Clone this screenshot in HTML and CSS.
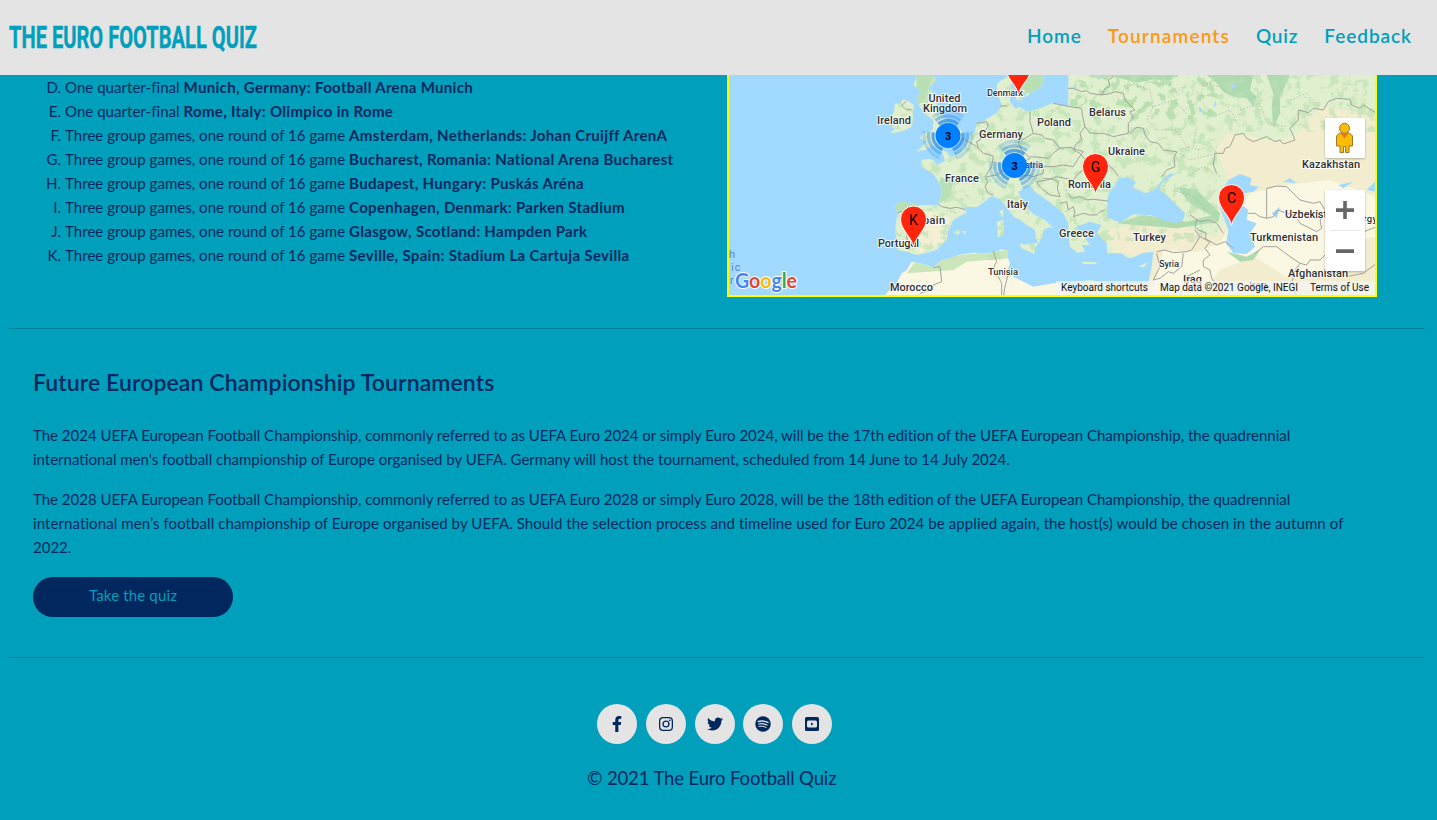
FILE: index.html
```
<!DOCTYPE html>
<html lang="en">
<head>
<meta charset="utf-8">
<title>The Euro Football Quiz</title>
<link rel="stylesheet" href="styles.css">
</head>
<body>
<header class="header">
  <a class="brand"><svg width="260" height="40"><text x="9" y="30" textLength="248" lengthAdjust="spacingAndGlyphs">THE EURO FOOTBALL QUIZ</text></svg></a>
  <nav class="nav">
    <a>Home</a><a class="active">Tournaments</a><a class="quiz">Quiz</a><a>Feedback</a>
  </nav>
</header>
<main>
  <section class="venues">
    <ol class="list" start="4">
      <li>One quarter-final <b>Munich, Germany: Football Arena Munich</b></li>
      <li>One quarter-final <b>Rome, Italy: Olimpico in Rome</b></li>
      <li>Three group games, one round of 16 game <b>Amsterdam, Netherlands: Johan Cruijff ArenA</b></li>
      <li>Three group games, one round of 16 game <b>Bucharest, Romania: National Arena Bucharest</b></li>
      <li>Three group games, one round of 16 game <b>Budapest, Hungary: Puskás Aréna</b></li>
      <li>Three group games, one round of 16 game <b>Copenhagen, Denmark: Parken Stadium</b></li>
      <li>Three group games, one round of 16 game <b>Glasgow, Scotland: Hampden Park</b></li>
      <li>Three group games, one round of 16 game <b>Seville, Spain: Stadium La Cartuja Sevilla</b></li>
    </ol>
    <div class="map">
      <svg width="646" height="220" viewBox="729 75 646 220">
        <defs>
          <filter id="woods" x="0" y="0" width="100%" height="100%" color-interpolation-filters="sRGB">
            <feTurbulence type="fractalNoise" baseFrequency=".035" numOctaves="4" seed="8"/>
            <feColorMatrix values="0 0 0 0 .73  0 0 0 0 .88  0 0 0 0 .70  9 0 0 0 -4.7"/>
          </filter>
          <path id="west" d="M605 270L625 266L640 270L650 285L664 278L675 273L665 240L680 245L690 262L705 255L720 240L745 210L755 190L765 185L770 160L785 155L805 145L830 128L845 105L830 60L832 40L868 15L885 15L872 50L884 60L870 78L870 95L885 115L900 112L920 125L960 115L1000 98L1035 108L1070 110L1070 470L1045 460L1030 430L1005 410L980 390L945 365L930 345L912 350L902 362L895 365L910 400L940 432L975 450L1000 475L985 472L970 480L966 505L955 520L948 505L945 480L920 465L900 450L882 440L870 425L840 388L815 378L790 398L770 412L735 410L740 428L720 438L700 450L685 480L680 510L650 540L620 548L590 555L570 548L535 540L525 480L532 430L525 405L545 395L600 405L655 405L665 370L660 340L640 312L605 290Z"/>
          <path id="isles" d="M592 15L638 15L650 30L625 55L650 75L650 120L682 155L700 170L720 175L732 200L700 218L690 230L655 230L635 226L618 240L600 242L590 245L620 215L600 205L610 190L638 180L640 150L612 130L600 110L590 90L602 60L580 45ZM525 100L540 102L545 90L560 90L582 105L578 130L580 150L575 170L545 185L512 190L525 175L515 172L530 155L515 140L522 125ZM890 15L972 15L965 50L930 70L920 80L906 55ZM898 520L915 524L955 518L945 535L943 552L905 535ZM830 455L850 450L852 492L834 502ZM838 422L850 418L848 446ZM885 70L908 72L906 92L890 90ZM700 487L715 480L720 490L710 494ZM725 484L738 483L736 494ZM662 498L672 493L668 503Z"/>
          <path id="africa" d="M575 575L600 580L640 592L665 570L690 565L715 555L760 548L800 550L830 545L845 538L865 542L862 560L870 580L860 610L900 630L940 650L1000 640L1040 640L1060 690L480 690L530 640L545 610L560 600Z"/>
          <clipPath id="land"><use href="#west"/><use href="#isles"/><use href="#africa"/></clipPath>
          <path id="pin" d="M0 0C-1.500-10-13-17-13-28A13 13 0 0 1 13-28C13-17 1.500-10 0 0Z" fill="#ff260d" stroke="#fff" stroke-width="1"/>
          <g id="cluster">
            <g fill="none" stroke="#1680ea" stroke-width="3.3">
              <circle r="15" stroke-opacity=".65" stroke-dasharray="21 10.4" transform="rotate(230)"/>
              <circle r="19.5" stroke-opacity=".4" stroke-dasharray="27 13.8" transform="rotate(230)"/>
              <circle r="24" stroke-opacity=".2" stroke-dasharray="33 17.2" transform="rotate(230)"/>
            </g>
            <circle r="12.5" fill="#0080ff"/>
            <text y="4" text-anchor="middle" class="count">3</text>
          </g>
        </defs>
        <rect x="727" y="75" width="650" height="222" fill="#a2d9ff"/>
        <g transform="translate(720 70) scale(.33333)">
          <path d="M1045 15H1970V680H1045Z" fill="#e0efcd"/>
          <path d="M1490 240L1520 190L1600 200L1680 215L1740 185L1800 110L1970 130V680H1240L1300 570L1180 545L1160 480L1240 465L1400 470L1490 500L1550 400Z" fill="#f2edcf"/>
          <path d="M1590 370L1700 345L1830 330L1970 380V500L1840 520L1820 600L1700 620L1600 560L1500 600L1440 680H1290L1330 540L1430 545L1500 520Z" fill="#faf7e3"/>
          <path d="M1150 15H1370L1350 32L1300 28L1250 38L1200 25ZM1460 15H1600L1590 60L1610 80L1600 110L1580 85L1540 80L1510 65L1490 40ZM1640 15H1710L1690 60L1680 80L1680 130L1660 175L1655 110L1660 70ZM1370 350L1430 360L1500 430L1480 440L1410 400ZM1190 460L1270 435L1400 455L1500 430L1495 455L1370 475L1250 465ZM1520 545L1580 560L1620 540L1600 570L1560 575Z" fill="#afdab0"/>
          <rect x="1045" y="15" width="445" height="130" filter="url(#woods)"/>
          <rect x="1045" y="145" width="445" height="370" filter="url(#woods)" opacity=".6"/>
          <rect x="1490" y="15" width="480" height="170" filter="url(#woods)" opacity=".6"/>
          <g fill="#a2d9ff">
            <path d="M960 15L1045 15L1035 60L1040 90L1025 108L960 110Z"/>
            <path d="M1160 440L1164 375L1200 325L1225 322L1245 335L1240 355L1275 370L1305 360L1320 338L1348 312L1368 310L1325 340L1318 360L1345 380L1360 395L1395 430L1390 450L1370 458L1340 455L1315 442L1290 435L1240 433L1200 458Z"/>
            <path d="M940 450L1020 455L1045 495L1050 530L1072 548L1096 545L1085 525L1110 525L1085 490L1070 470L1110 455L1145 465L1130 490L1160 520L1162 550L1180 550L1205 550L1220 562L1235 565L1265 550L1300 545L1295 590L1285 640L1160 642L1110 630L1070 635L1050 670L990 650L940 640Z"/>
            <path d="M1500 370L1525 330L1560 312L1595 325L1590 345L1617 350L1600 365L1570 370L1560 400L1585 420L1580 450L1610 460L1590 490L1605 530L1580 552L1540 550L1518 520L1525 480L1510 440L1500 410ZM1940 360L1970 330V365ZM1655 430L1680 410L1670 445ZM1690 335L1710 325L1730 340ZM1855 345L1900 335L1870 355ZM1540 35L1550 50L1535 60ZM1435 110L1448 118L1440 130ZM1485 90L1490 105L1482 112ZM1130 22L1145 18L1140 28ZM1060 45L1070 50L1064 62Z"/>
          </g>
          <g fill="#e0efcd"><use href="#west"/><use href="#isles"/></g>
          <use href="#africa" fill="#faf7e3"/>
          <g clip-path="url(#land)">
            <path d="M570 450L620 420L690 440L680 510L600 550L570 520Z" fill="#f5f0d5"/>
            <path d="M920 15H975V70H900ZM515 390L600 400L590 418L525 430ZM590 15H640L620 80L590 110ZM660 320L700 335L690 380L660 400Z" fill="#b8dfb5"/>
            <path d="M700 600L560 610L590 570L860 540L870 565L740 575Z" fill="#cce6bc"/>
            <rect x="480" y="15" width="590" height="555" filter="url(#woods)" opacity=".65"/>
          </g>
          <path d="M1255 590L1285 575L1272 592ZM1085 575L1130 577L1128 583L1090 582ZM1240 350L1260 325L1300 345L1275 368Z" fill="#e0efcd"/>
          <g fill="none" stroke="#a0a39c" stroke-width="3" stroke-linejoin="round">
            <path d="M560 92L545 107L560 120L575 118M532 430L542 425L570 432L565 470L560 500L568 540M655 402L665 410L690 415L710 412L735 418M728 205L745 215L770 230L790 250L820 258L815 290L795 320L803 335L795 350L805 370L820 375M770 160L800 155L805 170L785 190L780 210L770 215L775 235M840 108L860 108M930 125L930 155L940 190L915 205L895 215L905 240L930 265L912 275L905 295L880 310L850 300L830 315L800 320M940 190L965 195L975 205L1000 210L1020 235L1005 245L985 265L960 262L930 260M1020 235L1050 232L1090 245L1075 265L1060 290L1030 285L1000 290L970 290L970 310L940 320L920 315L900 320L880 310M970 325L1000 328L1015 335L1012 355L1020 380L990 375L970 360L955 345L950 335L980 330L1010 320L1060 330L1075 310L1090 300M1045 370L1055 385L1080 380L1100 390L1120 388L1165 393M1020 400L1040 395L1045 420L1060 410L1065 430L1060 440L1090 430L1110 435L1130 435L1140 425L1155 420M1000 100L1050 110L1085 115L1088 140L1095 170L1080 190L1085 210L1070 220L1060 240L1080 250L1095 268L1135 275L1150 265L1170 290L1182 300L1195 320M1045 55L1060 55L1085 65L1100 62L1110 70L1145 75L1155 55L1170 50L1165 30L1180 20M1145 75L1165 72L1185 65L1210 70L1215 90L1245 120L1230 125L1240 145L1225 160L1225 190L1180 200L1150 190L1110 190L1095 170M1230 190L1250 172L1270 175L1275 195L1290 215L1315 220L1330 240L1370 245L1362 265L1365 290L1340 300L1325 320M1410 435L1440 455L1465 450L1490 460L1510 490M1430 450L1425 470L1435 480L1460 490L1455 505L1490 525L1515 515L1540 535M1310 545L1335 540L1360 548L1400 545L1415 540L1440 500L1425 480M1310 550L1320 590L1300 630L1320 625L1345 605L1360 610L1385 590L1390 550M1440 500L1470 515L1455 535L1470 555L1450 570L1450 590L1470 600L1475 625L1485 640L1500 680M1605 550L1630 530L1670 530L1690 545L1710 560L1740 580L1725 600L1715 640L1730 680M1585 430L1605 430L1620 440L1640 445V355L1670 348L1700 350L1740 390L1780 400L1800 395L1820 430L1800 450L1805 475L1790 485L1740 460L1725 435L1700 430L1675 420L1660 440L1640 445M1490 310L1480 285L1485 250L1510 250L1515 235L1530 230L1545 195L1570 190L1580 205L1600 215L1640 200L1665 215L1680 210L1690 222L1725 210L1710 175L1735 150L1735 120L1765 128L1780 115L1810 120L1825 95L1850 85L1890 88L1895 105L1920 115L1930 105L1970 130M1740 580L1760 585L1770 570L1800 570L1820 550M640 592L660 590L665 635L640 645L630 660L600 670M820 545L830 575L822 590L830 610L845 640L845 680M865 610L855 650L850 680M1440 600L1400 620L1380 680M1870 480L1890 475L1920 490L1970 470M1880 620L1930 610L1970 580"/>
            <path d="M1200 70L1240 40L1290 60L1300 110L1360 90L1390 120L1440 90L1480 140L1530 120L1560 170M1300 110L1280 150L1310 180L1370 180L1400 230L1440 240L1470 220L1490 250M1390 120L1430 170L1420 230M1440 90L1450 40L1500 50L1530 80M1540 60L1560 20M1560 120L1620 100L1640 160L1700 170M1260 25L1300 40L1350 45L1380 80M1710 90L1760 70L1800 110M1370 245L1410 270L1490 250M1400 320L1450 290L1500 320M1360 360L1420 380L1460 420" stroke-dasharray="5 5" stroke="#a9b5a3" stroke-width="2"/>
          </g>
        </g>
        <g class="labels">
          <text x="928.500" y="102" textLength="32">United</text><text x="923" y="112" textLength="44">Kingdom</text><text x="877" y="124" textLength="34">Ireland</text>
          <text x="987" y="95.500" textLength="36" class="sm">Denmark</text><text x="979" y="138" textLength="44">Germany</text><text x="1037" y="126" textLength="34">Poland</text><text x="1089" y="116" textLength="37">Belarus</text>
          <text x="945" y="182" textLength="34">France</text><text x="1014" y="167.500" textLength="29" class="sm">Austria</text><text x="1007" y="208" textLength="21">Italy</text><text x="916" y="224" textLength="29">Spain</text><text x="878" y="247" textLength="41">Portugal</text>
          <text x="1068" y="188" textLength="43">Romania</text><text x="1108" y="155" textLength="37">Ukraine</text><text x="1059" y="237" textLength="35">Greece</text><text x="1133" y="241" textLength="33">Turkey</text><text x="1159" y="266.500" textLength="20" class="sm">Syria</text><text x="1183" y="283" textLength="19">Iraq</text><text x="1249" y="289" textLength="18">Iran</text>
          <text x="1302" y="168" textLength="58">Kazakhstan</text><text x="1285" y="218" textLength="54">Uzbekistan</text><text x="1250" y="241" textLength="68">Turkmenistan</text><text x="1288" y="277" textLength="60">Afghanistan</text><text x="1352" y="222" textLength="50" class="sm">Kyrgyzstan</text>
          <text x="890" y="291" textLength="43">Morocco</text><text x="988" y="274.500" textLength="30" class="sm">Tunisia</text>
        </g>
        <g class="ocean"><text x="729" y="258">h</text><text x="731" y="271">ic</text><text x="730" y="284">r</text></g>
        <use href="#cluster" x="948" y="135.500"/><use href="#cluster" x="1014.500" y="165.500"/>
        <use href="#pin" x="1018.500" y="95"/><use href="#pin" x="913.500" y="247"/><use href="#pin" x="1095.500" y="194.500"/><use href="#pin" x="1231.500" y="225.500"/>
        <g class="pintext"><text x="913.500" y="225">K</text><text x="1095.500" y="172">G</text><text x="1231.500" y="203">C</text></g>
        <text class="google" x="735" y="288" textLength="62" lengthAdjust="spacingAndGlyphs"><tspan fill="#4285f4">G</tspan><tspan fill="#ea4335">o</tspan><tspan fill="#fbbc05">o</tspan><tspan fill="#4285f4">g</tspan><tspan fill="#34a853">l</tspan><tspan fill="#ea4335">e</tspan></text>
        <rect x="1056" y="281" width="319" height="14" fill="#f5f5f5" opacity=".7"/>
        <g class="legal"><text x="1061" y="291" textLength="87">Keyboard shortcuts</text><text x="1160" y="291" textLength="138">Map data ©2021 Google, INEGI</text><text x="1310" y="291" textLength="59">Terms of Use</text></g>
        <g class="controls"><rect x="1325" y="118" width="40" height="40" rx="1.500"/><rect x="1325" y="190" width="40" height="81" rx="1.500"/></g>
        <g fill="#fbbc05" stroke="#9b7732" stroke-width="1"><path d="M1339.500 133h10l3 3v10h-3.500v6.500h-3.500v-6h-2v6h-3.500V146h-3.500v-10z"/><circle cx="1344.500" cy="128.300" r="5"/></g>
        <path d="M1340.500 133.500h8l-4 5z" fill="#e9791d"/>
        <path d="M1336 208.300h18v3.600h-18zM1343.200 201h3.600v18h-3.600zM1336 249.300h18v3.600h-18z" fill="#666"/><path d="M1330 230.500h30" stroke="#e6e6e6"/>
      </svg>
    </div>
  </section>
  <hr>
  <section class="future">
    <h2>Future European Championship Tournaments</h2>
    <p><span class="line-fit">The 2024 UEFA European Football Championship, commonly referred to as UEFA Euro 2024 or simply Euro 2024, will be the 17th edition of the UEFA European Championship, the quadrennial</span><br>international men's football championship of Europe organised by UEFA. Germany will host the tournament, scheduled from 14 June to 14 July 2024.</p>
    <p><span class="line-fit">The 2028 UEFA European Football Championship, commonly referred to as UEFA Euro 2028 or simply Euro 2028, will be the 18th edition of the UEFA European Championship, the quadrennial</span><br><span class="line-wide">international men’s football championship of Europe organised by UEFA. Should the selection process and timeline used for Euro 2024 be applied again, the host(s) would be chosen in the autumn of</span><br><span class="line-fit">2022.</span></p>
    <a class="button">Take the quiz</a>
  </section>
  <hr>
</main>
<footer>
  <div class="social">
    <a><svg width="10" height="16" viewBox="0 0 320 512"><path d="M279.140 288l14.220-92.660h-88.910v-60.130c0-25.350 12.420-50.060 52.240-50.060h40.420V6.260S260.430 0 225.360 0c-73.220 0-121.080 44.380-121.080 124.720v70.620H22.890V288h81.390v224h100.170V288z"/></svg></a>
    <a><svg width="14" height="14" viewBox="0 0 14 14"><rect x=".65" y=".65" width="12.700" height="12.700" rx="3.400" fill="none" stroke="#00285e" stroke-width="1.300"/><circle cx="7" cy="7" r="2.950" fill="none" stroke="#00285e" stroke-width="1.300"/><circle cx="10.750" cy="3.250" r=".85"/></svg></a>
    <a><svg width="16" height="16" viewBox="0 0 512 512"><path d="M459.370 151.716c.325 4.548.325 9.097.325 13.645 0 138.720-105.583 298.558-298.558 298.558-59.452 0-114.680-17.219-161.137-47.106 8.447.974 16.568 1.299 25.340 1.299 49.055 0 94.213-16.568 130.274-44.832-46.132-.975-84.792-31.188-98.112-72.772 6.498.974 12.995 1.624 19.818 1.624 9.421 0 18.843-1.300 27.614-3.573-48.081-9.747-84.143-51.980-84.143-102.985v-1.299c13.969 7.797 30.214 12.670 47.431 13.319-28.264-18.843-46.781-51.005-46.781-87.391 0-19.492 5.197-37.360 14.294-52.954 51.655 63.675 129.300 105.258 216.365 109.807-1.624-7.797-2.599-15.918-2.599-24.040 0-57.828 46.782-104.934 104.934-104.934 30.213 0 57.502 12.670 76.670 33.137 23.715-4.548 46.456-13.320 66.599-25.340-7.798 24.366-24.366 44.833-46.132 57.827 21.117-2.273 41.584-8.122 60.426-16.243-14.292 20.791-32.161 39.308-52.628 54.253z"/></svg></a>
    <a><svg width="16" height="16" viewBox="0 0 16 16"><circle cx="8" cy="8" r="7.750"/><g fill="none" stroke="#e4e4e4" stroke-linecap="round"><path d="M3.300 5.500Q8 4 12.900 6.400" stroke-width="1.500"/><path d="M3.700 8Q8 6.800 12 9" stroke-width="1.200"/><path d="M4 10.300Q7.800 9.400 11.100 11.300" stroke-width="1"/></g></svg></a>
    <a><svg width="14" height="14" viewBox="0 0 14 14"><rect width="14" height="14" rx="1.600"/><rect x="2" y="3.500" width="10" height="7" rx="1.500" fill="#e4e4e4"/><path d="M6 5.500L8.600 7L6 8.500z"/></svg></a>
  </div>
  <p class="copy">© 2021 The Euro Football Quiz</p>
</footer>
</body>
</html>
```
FILE: styles.css
```
* { box-sizing: border-box; }
body { margin: 0; height: 820px; overflow: hidden; background: #009fbc; color: #00285e; font: 15px/24px Lato, sans-serif; }
.header { height: 75px; background: #e4e4e4; color: #009fbc; display: flex; justify-content: space-between; align-items: center; padding-right: 25px; }
.brand { height: 40px; }
.brand text { font: 700 31px Roboto, sans-serif; fill: #009fbc; stroke: #009fbc; stroke-width: .4px; }
.nav { display: flex; gap: 26px; font-size: 19px; font-weight: 600; letter-spacing: .95px; line-height: 24px; padding-bottom: 3px; }
.nav a { white-space: nowrap; }
.nav .active { color: #ff9810; letter-spacing: 1.15px; }
.nav .quiz { letter-spacing: .8px; }
.venues { display: flex; height: 222px; }
.list { list-style: upper-alpha; margin: 0; padding: 0 0 0 65px; width: 727px; height: 192px; white-space: nowrap; letter-spacing: .045px; }
.list b { letter-spacing: .33px; }
.map { width: 650px; height: 222px; border: 2px solid #ff0; border-top: 0; }
.map svg { display: block; }
.labels { font: 500 11px Roboto, sans-serif; fill: #303030; stroke: #fff; stroke-width: 2px; stroke-opacity: .8; paint-order: stroke; }
.labels .sm { font-size: 9.500px; }
.ocean { font: 11px Roboto, sans-serif; fill: #5688c7; letter-spacing: 1px; }
.count { font: bold 11px "Liberation Sans", sans-serif; }
.pintext { font: 14px Roboto, sans-serif; text-anchor: middle; }
.google { font: 700 20px Lato, sans-serif; stroke: #fff; stroke-width: 2px; paint-order: stroke; }
.legal { font: 10px Roboto, sans-serif; fill: #111; }
.controls { fill: #fff; filter: drop-shadow(0 1px 1px #0004); }
hr { height: 1px; border: 0; background: #087f9a; margin: 31px 12px 0 9px; }
.future { padding: 37px 33px 0; height: 328px; white-space: nowrap; }
h2 { font-size: 23px; line-height: 32px; font-weight: 600; letter-spacing: .1px; margin: 0 0 25px; }
p { margin: 0 0 16px; }
.line-fit { letter-spacing: -.012px; }
.line-wide { letter-spacing: .092px; }
.future p:last-of-type { margin-bottom: 18px; }
.button { display: flex; justify-content: center; width: 200px; height: 40px; border-radius: 20px; background: #00285e; color: #009fbc; line-height: 37px; letter-spacing: .15px; }
.future + hr { margin-top: 0; }
footer { padding-top: 46px; }
.social { display: flex; gap: 8.750px; margin-left: 597px; }
.social a { width: 40px; height: 40px; border-radius: 50%; background: #e4e4e4; display: flex; align-items: center; justify-content: center; }
.social svg { fill: #00285e; }
.copy { margin: 22px 0 0 587px; font-size: 18.500px; letter-spacing: -.12px; white-space: nowrap; }
```
